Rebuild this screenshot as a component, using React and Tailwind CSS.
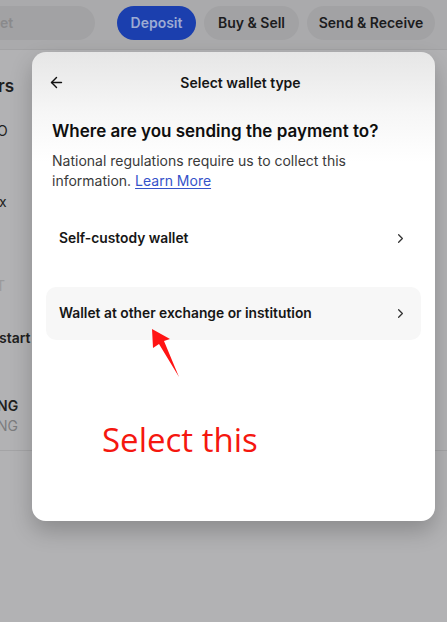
import { ArrowLeft, ChevronRight } from 'lucide-react'

const font = { fontFamily: 'Inter, "Noto Sans", sans-serif' }

function Pill({ children, className }) {
  return (
    <div className={`flex h-[34px] shrink-0 items-center justify-center rounded-full text-[14px] font-semibold ${className}`}>
      {children}
    </div>
  )
}

function WalletRow({ label, active }) {
  return (
    <div
      className={`flex h-[53px] items-center justify-between rounded-[10px] pl-[13px] pr-[13px] ${
        active ? 'bg-[#f7f7f7]' : ''
      }`}
    >
      <span className="text-[13.8px] font-semibold text-[#161616]">{label}</span>
      <ChevronRight size={15} strokeWidth={2} className="text-[#333]" />
    </div>
  )
}

export default function App() {
  return (
    <div className="relative h-[622px] w-[447px] overflow-hidden bg-[#b2b2b4]" style={font}>
      {/* page behind the overlay */}
      <div className="flex h-[50px] items-center gap-2 border-b border-[#a2a2a4] bg-[#aaaaac] pb-[8px] pt-[4px]">
        <Pill className="-ml-[60px] w-[155px] justify-start bg-[#a2a2a4] pl-[60px] font-normal text-[#8a8a8c]">et</Pill>
        <Pill className="ml-[14px] w-[79px] bg-[#1b3fae] text-[#9dabd3]">Deposit</Pill>
        <Pill className="w-[95px] bg-[#a2a2a4] text-[#1c1c1e]">Buy &amp; Sell</Pill>
        <Pill className="w-[128px] bg-[#a2a2a4] text-[#1c1c1e]">Send &amp; Receive</Pill>
      </div>

      <div className="flex flex-col text-[#1e1e20]">
        <div className="-ml-[2px] mt-[24px] h-[24px] text-[17px] font-semibold leading-[24px]">rs</div>
        <div className="-ml-[3px] mt-[23px] h-[20px] text-[14px] leading-[20px]">O</div>
        <div className="-ml-[1px] mt-[51px] h-[20px] text-[14px] leading-[20px]">x</div>
        <div className="-ml-[4px] mt-[64px] h-[20px] text-[14px] leading-[20px] text-[#9a9a9c]">T</div>
        <div className="-ml-[1px] mt-[32px] h-[20px] text-[14px] font-semibold leading-[20px]">start</div>
        <div className="-ml-[3px] mt-[48px] h-[20px] text-[14px] font-semibold leading-[20px]">NG</div>
        <div className="-ml-[3px] h-[20px] text-[14px] leading-[20px] text-[#7c7c7e]">NG</div>
        <div className="mt-[14px] border-b border-[#a4a4a6]" />
      </div>

      {/* modal */}
      <div className="absolute left-[32px] top-[52px] flex h-[469px] w-[403px] flex-col rounded-[14px] bg-[linear-gradient(to_bottom,#e6e6e6_0px,#f6f6f6_60px,#ffffff_110px)] shadow-[0_10px_22px_rgba(0,0,0,0.22)]">
        <div className="grid h-[60px] grid-cols-[24px_1fr_24px] items-center px-4">
          <ArrowLeft size={17} strokeWidth={2} className="text-[#111]" />
          <div className="pl-[14px] text-center text-[14px] font-semibold text-[#161616]">Select wallet type</div>
          <div />
        </div>

        <div className="px-5">
          <h2 className="mt-[7px] text-[17px] font-semibold leading-[24px] text-[#0e0e0e]">
            Where are you sending the payment to?
          </h2>
          <p className="mt-[8px] text-[14px] leading-[20px] text-[#3a3a3a]">
            National regulations require us to collect this
            <br />
            information. <span className="text-[#3553c9] underline underline-offset-2">Learn More</span>
          </p>
        </div>

        <div className="mt-[21px] flex flex-col gap-[22px] px-[14px]">
          <WalletRow label="Self-custody wallet" />
          <WalletRow label="Wallet at other exchange or institution" active />
        </div>
      </div>

      {/* annotation */}
      <svg className="absolute left-0 top-0" width="447" height="622" viewBox="0 0 447 622">
        <polygon points="152,329 170,339 164,341 179,377 159,344 153,348" fill="#ff1414" />
      </svg>
      <div
        className="absolute left-[102px] top-[418px] text-[33px] leading-[44px] text-[#f5170f]"
        style={{ fontFamily: '"Open Sans", sans-serif' }}
      >
        Select this
      </div>
    </div>
  )
}
